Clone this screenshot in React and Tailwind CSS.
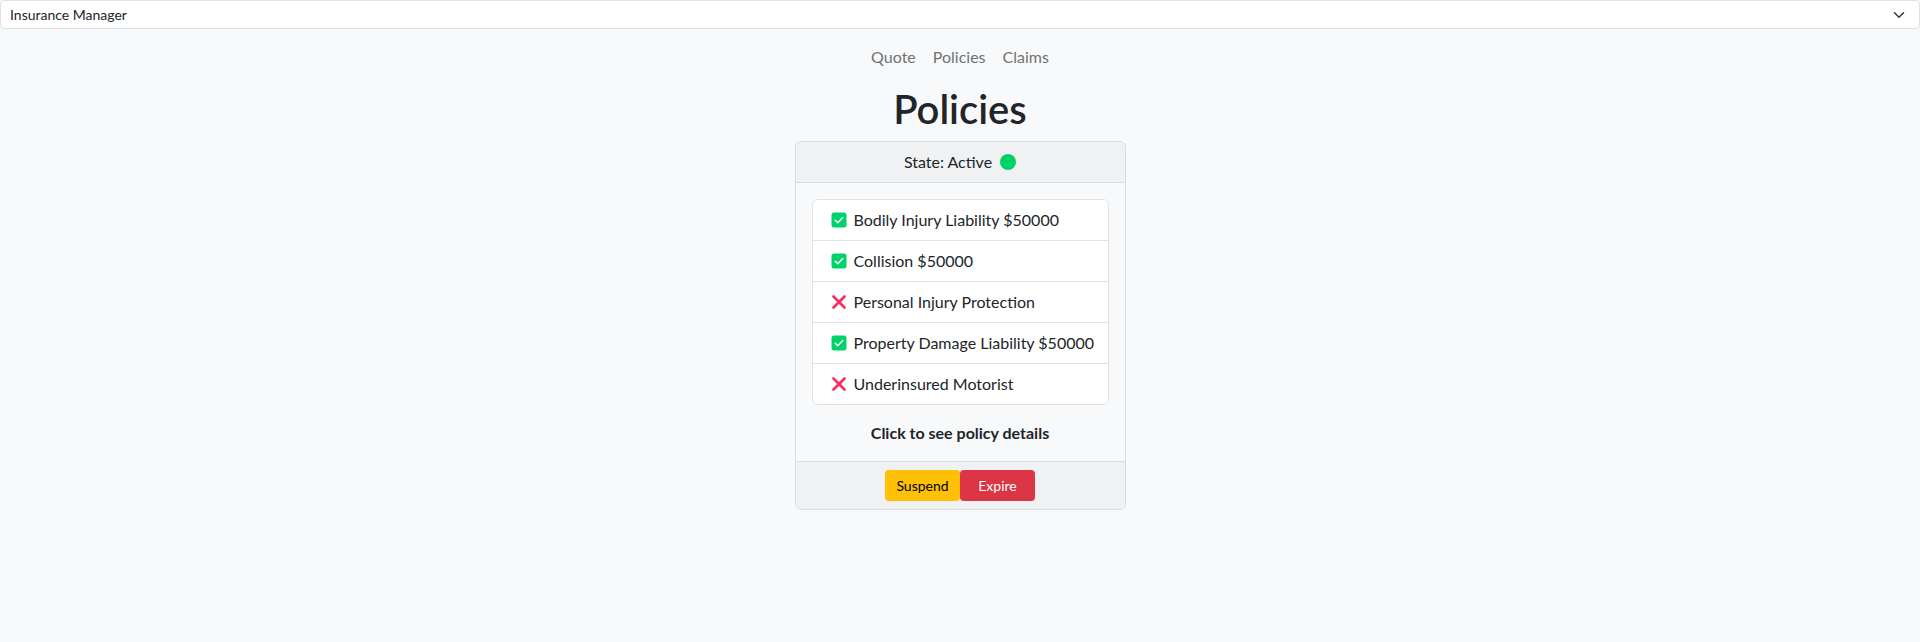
import React from "react";

const COVERAGES = [
  { ok: true, label: "Bodily Injury Liability $50000" },
  { ok: true, label: "Collision $50000" },
  { ok: false, label: "Personal Injury Protection" },
  { ok: true, label: "Property Damage Liability $50000" },
  { ok: false, label: "Underinsured Motorist" },
];

function CheckIcon() {
  return (
    <svg width="16" height="16" viewBox="0 0 32 32" className="shrink-0">
      <rect x="1" y="1" width="30" height="30" rx="5" fill="#00D26A" />
      <path d="M8.5 16.5l5 5 10-10.5" fill="none" stroke="#fff" strokeWidth="3" strokeLinecap="round" strokeLinejoin="round" />
    </svg>
  );
}

function CrossIcon() {
  return (
    <svg width="16" height="16" viewBox="0 0 32 32" className="shrink-0">
      <path d="M5 5l22 22M27 5L5 27" fill="none" stroke="#F92F60" strokeWidth="5.5" strokeLinecap="round" />
    </svg>
  );
}

function Chevron() {
  return (
    <svg width="16" height="12" viewBox="0 0 16 16">
      <path d="m2 5 6 6 6-6" fill="none" stroke="#343a40" strokeWidth="2" strokeLinecap="round" strokeLinejoin="round" />
    </svg>
  );
}

export default function App() {
  return (
    <div className="min-h-[642px] bg-[#f8f9fa] text-[#212529] font-['Lato','Noto_Sans',sans-serif]">
      {/* app selector */}
      <div className="h-[29px] bg-white border border-[#dee2e6] rounded-[4px] flex items-center justify-between pl-[9px] pr-[12px] text-[14px]">
        <span>Insurance Manager</span>
        <Chevron />
      </div>

      {/* nav */}
      <nav className="mt-[16px] flex justify-center gap-[17px] text-[16px] leading-6 text-[#707274]">
        <a href="#">Quote</a>
        <a href="#">Policies</a>
        <a href="#">Claims</a>
      </nav>

      <h1 className="mt-[16px] mb-2 text-center text-[40px] leading-[48px] font-semibold">Policies</h1>

      {/* policy card */}
      <div className="w-[331px] mx-auto border border-[#dadcde] rounded-[6px] overflow-hidden">
        <div className="bg-[#f0f1f2] border-b border-[#dadcde] py-2 flex items-center justify-center gap-[8px] leading-6">
          <span>State: Active</span>
          <span className="w-4 h-4 rounded-full bg-[#00D26A]" />
        </div>

        <div className="p-4">
          <ul className="bg-white border border-[#dee2e6] rounded-[6px]">
            {COVERAGES.map((c, i) => (
              <li
                key={c.label}
                className={`flex items-center gap-[7px] pl-[18px] pr-1 py-2 leading-6 whitespace-nowrap ${i < COVERAGES.length - 1 ? "border-b border-[#dee2e6]" : ""}`}
              >
                {c.ok ? <CheckIcon /> : <CrossIcon />}
                <span>{c.label}</span>
              </li>
            ))}
          </ul>
          <p className="mt-4 text-center font-bold leading-6">Click to see policy details</p>
        </div>

        <div className="bg-[#f0f1f2] border-t border-[#dadcde] py-2 flex justify-center text-[14px]">
          <button className="w-[75px] h-[31px] bg-[#ffc107] text-black rounded-[4px]">Suspend</button>
          <button className="w-[75px] h-[31px] bg-[#dc3545] text-white rounded-[4px]">Expire</button>
        </div>
      </div>
    </div>
  );
}
